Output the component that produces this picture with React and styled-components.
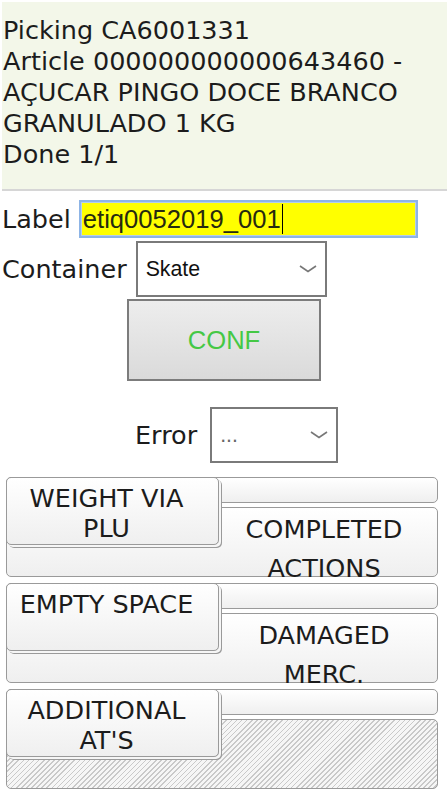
import React from 'react';
import styled, {createGlobalStyle, css} from 'styled-components';

const GlobalStyle = createGlobalStyle`
  body {
    margin: 0;
    background: #fff;
    font-family: "DejaVu Sans", Verdana, sans-serif;
    color: #1c1c1c;
  }
`;

const Header = styled.div`
  margin: 2px 0 0 2px;
  padding: 13px 0 19px 1px;
  background: #f3f7e9;
  border-bottom: 2px solid #d6d6d6;
  font-size: 25.5px;
  line-height: 31px;
`;

const Form = styled.div`
  padding-left: 2px;
`;

const FieldRow = styled.div`
  display: flex;
  align-items: center;
  gap: ${(props) => props.$gap || 9}px;
  margin-top: ${(props) => props.$top || 0}px;
  padding-left: ${(props) => props.$indent || 0}px;
`;

const FieldLabel = styled.span`
  font-size: 25.5px;
  line-height: 31px;
`;

const TextBox = styled.div`
  box-sizing: border-box;
  width: 339px;
  height: 38px;
  display: flex;
  align-items: center;
  padding-left: 2px;
  background: #ffff00;
  border: 2px solid #8db4e6;
  box-shadow: inset 0 0 0 1px #b7cfe9;
  font-family: "Liberation Sans", Arial, sans-serif;
  font-size: 25.6px;
  color: #262a10;
`;

const Caret = styled.span`
  display: inline-block;
  width: 1px;
  height: 30px;
  margin-left: 1px;
  background: #000;
`;

const Select = styled.div`
  box-sizing: border-box;
  width: ${(props) => props.$width}px;
  height: 56px;
  display: flex;
  align-items: center;
  justify-content: space-between;
  padding: 0 8px 0 8px;
  background: #fff;
  border: 2px solid #7a7a7a;
  font-family: "Liberation Sans", Arial, sans-serif;
  font-size: 21.3px;
  color: ${(props) => (props.$muted ? '#666' : '#111')};
`;

const ConfButton = styled.div`
  box-sizing: border-box;
  width: 194px;
  height: 82px;
  margin: 2px 0 0 125px;
  display: flex;
  align-items: center;
  justify-content: center;
  border: 2px solid #7c7c7c;
  background: linear-gradient(#ededed, #dadada);
  font-family: "Liberation Sans", Arial, sans-serif;
  font-size: 25.6px;
  color: #45c845;
`;

const ButtonGrid = styled.div`
  margin-top: 14px;
  padding: 0 9px 0 6px;
  display: flex;
  flex-direction: column;
  gap: 6px;
`;

const ButtonRow = styled.div`
  display: grid;
  grid-template-columns: 213px 1fr;
  grid-template-rows: 26px 4px 38px 32px;
`;

const tile = css`
  box-sizing: border-box;
  border: 1px solid #9a9a9a;
  border-radius: 5px;
  background: linear-gradient(#ffffff, #efefef);
`;

const Strip = styled.div`
  ${tile};
  grid-area: 1 / 1 / 2 / 3;
`;

const Body = styled.div`
  ${tile};
  grid-area: 3 / 1 / 5 / 3;
  padding: 2px 12px 0 216px;
  text-align: center;
  font-size: 25.5px;
  line-height: 38.5px;
  ${(props) => props.$hatched && css`
    background: repeating-linear-gradient(135deg, #c9c9c9 0 1.2px, #f6f6f6 1.2px 3.6px);
  `};
`;

const LeftButton = styled.div`
  ${tile};
  grid-area: 1 / 1 / 4 / 2;
  z-index: 1;
  padding: 5px 12px 0 0;
  text-align: center;
  font-size: 25.5px;
  line-height: 30px;
  box-shadow: 2px 2px 0 0 #f6f6f6, 3px 3px 0 0 #9a9a9a;
`;

function Chevron() {
  return (
    <svg width="18" height="8" viewBox="0 0 18 8">
      <polyline points="1,1 9,6.5 17,1" fill="none" stroke="#777" strokeWidth="1.6" />
    </svg>
  );
}

const actions = [
  {left: 'WEIGHT VIA PLU', right: 'COMPLETED ACTIONS'},
  {left: 'EMPTY SPACE', right: 'DAMAGED MERC.'},
  {left: "ADDITIONAL AT'S", right: '', hatched: true},
];

function App() {
  return (
    <>
      <GlobalStyle />
      <Header>
        Picking CA6001331<br />
        Article 000000000000643460 -<br />
        AÇUCAR PINGO DOCE BRANCO<br />
        GRANULADO 1 KG<br />
        Done 1/1
      </Header>

      <Form>
        <FieldRow $top={9} $gap={8}>
          <FieldLabel>Label</FieldLabel>
          <TextBox>etiq0052019_001<Caret /></TextBox>
        </FieldRow>

        <FieldRow $top={3} $gap={9}>
          <FieldLabel>Container</FieldLabel>
          <Select $width={191}>Skate<Chevron /></Select>
        </FieldRow>

        <ConfButton>CONF</ConfButton>

        <FieldRow $top={26} $gap={13} $indent={133}>
          <FieldLabel>Error</FieldLabel>
          <Select $width={128} $muted>...<Chevron /></Select>
        </FieldRow>
      </Form>

      <ButtonGrid>
        {actions.map((a) => (
          <ButtonRow key={a.left}>
            <Strip />
            <Body $hatched={a.hatched}>{a.right}</Body>
            <LeftButton>{a.left}</LeftButton>
          </ButtonRow>
        ))}
      </ButtonGrid>
    </>
  );
}

export default App;
